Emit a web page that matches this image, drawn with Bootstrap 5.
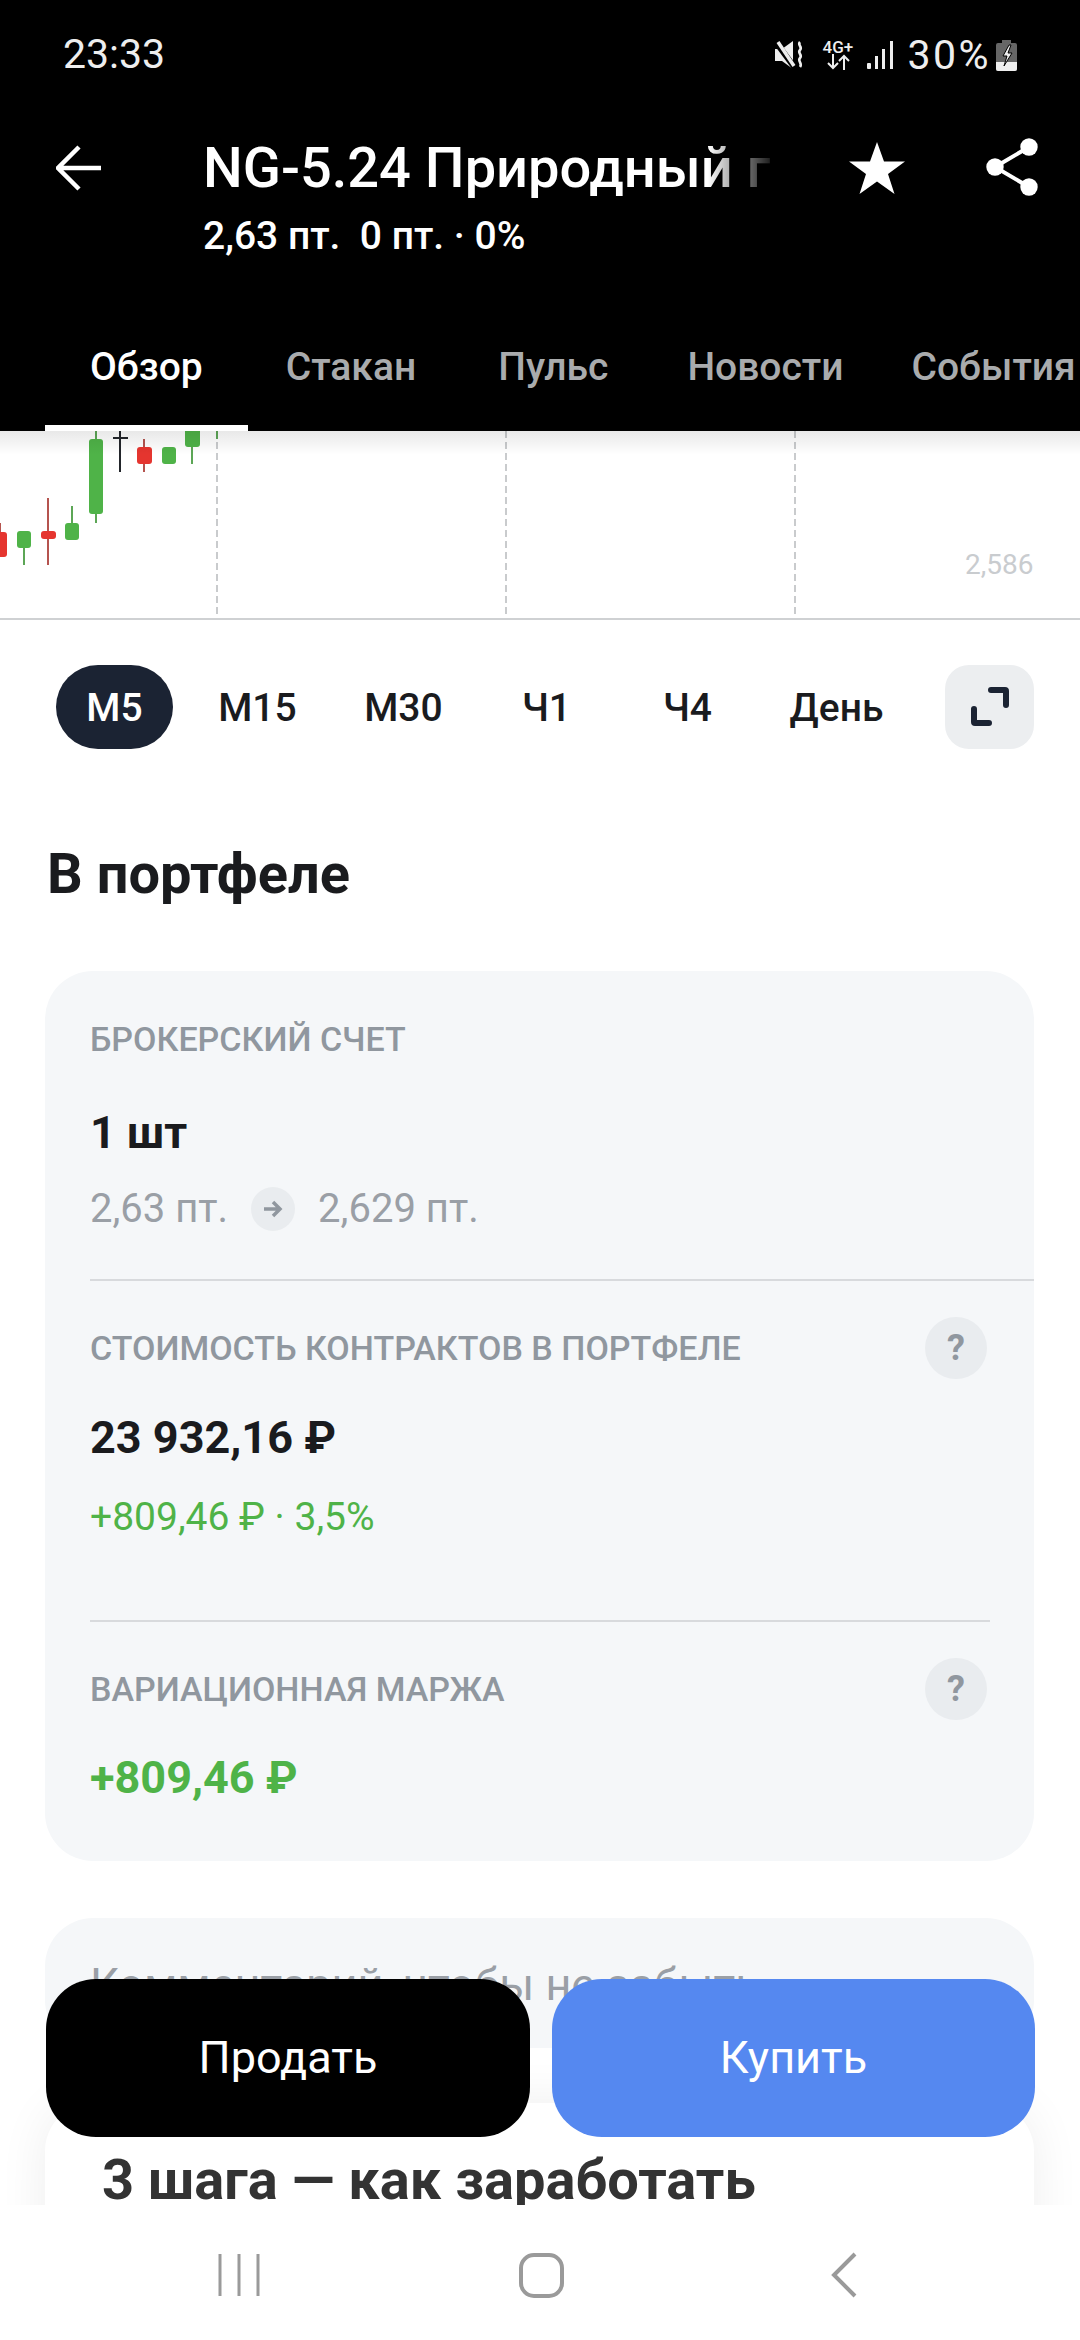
<!DOCTYPE html>
<html lang="ru">
<head>
<meta charset="utf-8">
<title>NG-5.24</title>
<link href="https://cdn.jsdelivr.net/npm/bootstrap@5.3.0/dist/css/bootstrap.min.css" rel="stylesheet">
<style>
html,body{margin:0;height:2340px;overflow:hidden;background:#fff;}
body{font-family:Roboto,"Liberation Sans",sans-serif;color:#1a1b1e;}
.app-shell{height:2340px;}
.top-zone{background:#000;color:#fff;height:431px;flex:none;}
.status-row{height:110px;padding:0 63px;}
.clock{font-size:41px;line-height:1;color:#eee;margin-top:-2px;}
.net-stack{width:33px;margin:0 13px 0 16px;line-height:1;}
.net-text{font-size:17px;font-weight:500;color:#eee;line-height:14px;}
.pct{font-size:41px;line-height:1;color:#eee;margin:0 5px 0 13px;letter-spacing:2.500px;}
.title-row{height:148px;padding-left:56px;}
.back-wrap{width:147px;flex:none;padding-top:35px;}
.title-col{width:570px;flex:none;padding-top:26px;}
.title-main{font-size:56px;font-weight:500;line-height:64px;white-space:nowrap;width:fit-content;-webkit-mask-image:linear-gradient(90deg,#000 89%,rgba(0,0,0,.12) 100%);mask-image:linear-gradient(90deg,#000 89%,rgba(0,0,0,.12) 100%);}
.title-sub{font-size:39px;font-weight:500;line-height:44px;margin-top:14px;white-space:nowrap;}
.star-ic{margin:32px 0 0 76px;}
.share-ic{margin:28px 0 0 81px;}
.tab-strip{padding:84px 0 0 45px;flex-wrap:nowrap;height:173px;margin:0;}
.tab-item{color:#a9abad;font-size:39px;font-weight:500;line-height:50px;padding:0;margin-right:82px;white-space:nowrap;}
.tab-item:hover{color:#a9abad;}
.tab-first,.tab-first:hover{padding:0 45px;margin-right:38px;border-bottom:6px solid #fff;color:#fff;}
.tab-mid{margin-right:79px;}
.tab-close{margin-right:68px;}
.main-zone{flex:1 1 auto;min-height:0;overflow:hidden;}
.chart-box{height:189px;border-bottom:2px solid #cfd1d3;}
.chart-box svg{display:block;}
.axis-label{font-size:28px;fill:#c9cccf;font-family:Roboto,"Liberation Sans",sans-serif;}
.period-row{padding:45px 46px 0 56px;}
.period-item{width:117px;height:84px;margin-right:26px;font-size:39px;font-weight:500;color:#1a1b1e;padding:0;border-radius:42px;line-height:86px;text-align:center;white-space:nowrap;}
.period-item:hover{color:#1a1b1e;}
.period-on,.period-on:hover{background:#1b2333;color:#fff;}
.gap-wide{margin-right:29px;}
.gap-tight{margin-right:24px;}
.gap-day{margin-right:32px;}
.expand-btn{width:89px;height:84px;background:#eceef0;border-radius:24px;margin-left:auto;}
.sect-title{font-size:56px;font-weight:700;line-height:64px;margin:93px 0 0 47px;color:#1a1b1e;}
.pf-card{margin:65px 46px 0 45px;background:#f5f7f9;border:0;border-radius:48px;height:890px;padding:0 0 0 45px;}
.pf-label{font-size:34px;font-weight:500;color:#90979f;line-height:40px;white-space:nowrap;}
.pf-big{font-size:45px;font-weight:700;line-height:50px;color:#1a1b1e;}
.pf-price{font-size:40px;color:#9a9fa6;line-height:46px;white-space:nowrap;}
.go-dot{width:44px;height:44px;border-radius:50%;background:#e9ecef;margin:0 23px;}
.pf-rule-a{border-top:2px solid #d8dadd;margin-top:47px;}
.pf-rule-b{border-top:2px solid #d8dadd;margin:81px 44px 0 0;}
.qmark{width:62px;height:62px;border-radius:50%;background:#e9ecef;color:#90979f;font-size:36px;font-weight:700;line-height:62px;text-align:center;flex:none;margin-right:47px;}
.pos-text{color:#4fb348;font-size:39px;line-height:44px;white-space:nowrap;margin-top:32px;}
.pos-big{color:#4fb348;font-size:45px;font-weight:700;line-height:50px;margin-top:33px;}
.pf-a{margin-top:48px;}
.pf-b{margin-top:49px;}
.pf-c{margin-top:28px;}
.pf-d{margin-top:36px;}
.pf-e{margin-top:34px;}
.pf-h{margin-top:36px;}
.note-card{margin:57px 46px 0 45px;background:#f5f7f9;border:0;border-radius:48px;height:130px;padding:40px 45px 0;color:#9a9fa6;font-size:45px;line-height:54px;white-space:nowrap;}
.step-card{position:absolute;left:45px;right:46px;top:1672px;height:400px;background:#fff;border:0;border-radius:48px;box-shadow:0 0 50px rgba(0,0,0,.07);padding:45px 57px;font-size:56px;font-weight:700;line-height:64px;color:#333;white-space:nowrap;}
.deal-btn{position:absolute;top:1548px;height:158px;border:0;border-radius:50px;font-size:45px;font-weight:400;color:#fff;padding:0;}
.deal-sell,.deal-sell:hover{left:46px;width:484px;background:#000;color:#fff;}
.deal-buy,.deal-buy:hover{left:552px;width:483px;background:#5588f0;color:#fff;}
.sys-nav{height:135px;flex:none;background:#fff;z-index:2;}
.sys-nav svg{display:block;}
</style>
</head>
<body>
<div class="app-shell d-flex flex-column">
  <header class="top-zone">
    <div class="status-row d-flex justify-content-between align-items-center">
      <span class="clock">23:33</span>
      <div class="d-flex align-items-center">
        <svg width="30" height="28" viewBox="0 0 30 28"><path d="M0 8h7l11-8v28L7 20H0z" fill="#eee"/><path d="M0 0l20 27" stroke="#000" stroke-width="6"/><path d="M3 1l16 24" stroke="#eee" stroke-width="3.500"/><path d="M25 1c-3 3 3 5 0 8s3 5 0 8 3 5 0 9" fill="none" stroke="#eee" stroke-width="2.600"/></svg>
        <div class="net-stack d-flex flex-column align-items-center">
          <span class="net-text">4G+</span>
          <svg width="26" height="16" viewBox="0 0 26 16"><path d="M8 0v14M3 9l5 5 5-5M19 16V2M14 7l5-5 5 5" fill="none" stroke="#eee" stroke-width="2"/></svg>
        </div>
        <svg width="27" height="28" viewBox="0 0 27 28"><g fill="#eee"><rect x="0" y="22" width="4" height="6" rx="1"/><rect x="8" y="15" width="3" height="13"/><rect x="15" y="8" width="3" height="20"/><rect x="23" y="0" width="3" height="28"/></g></svg>
        <span class="pct">30%</span>
        <svg width="21" height="31" viewBox="0 0 21 31"><path d="M6 0h9v3h4a2 2 0 0 1 2 2v24a2 2 0 0 1-2 2H2a2 2 0 0 1-2-2V5a2 2 0 0 1 2-2h4z" fill="#666"/><path d="M0 22h21v7a2 2 0 0 1-2 2H2a2 2 0 0 1-2-2z" fill="#eee"/><path d="M13 5l-6 11h4l-3 10 8-13h-4l3-8z" fill="#eee" stroke="#000" stroke-width="1"/></svg>
      </div>
    </div>
    <div class="title-row d-flex align-items-start">
      <div class="back-wrap">
        <svg width="46" height="46" viewBox="0 0 46 46"><path d="M45 23H3M23 2L2 23l21 21" fill="none" stroke="#fff" stroke-width="4.500"/></svg>
      </div>
      <div class="title-col">
        <div class="title-main">NG-5.24 Природный г</div>
        <div class="title-sub">2,63 пт.&nbsp; 0 пт. · 0%</div>
      </div>
      <svg class="star-ic" width="56" height="52" viewBox="0 0 56 52"><path d="M28 0l7 19.500h21L39 32l6.500 20L28 39.500 10.500 52 17 32 0 19.500h21z" fill="#fff"/></svg>
      <svg class="share-ic" width="52" height="60" viewBox="0 0 52 60"><g fill="#fff"><circle cx="43" cy="9" r="8.700"/><circle cx="9" cy="29" r="8.700"/><circle cx="43" cy="49" r="8.700"/></g><path d="M43 9L9 29l34 20" fill="none" stroke="#fff" stroke-width="4"/></svg>
    </div>
    <nav class="nav tab-strip">
      <a class="nav-link tab-item tab-first" href="#">Обзор</a>
      <a class="nav-link tab-item" href="#">Стакан</a>
      <a class="nav-link tab-item tab-mid" href="#">Пульс</a>
      <a class="nav-link tab-item tab-close" href="#">Новости</a>
      <a class="nav-link tab-item" href="#">События</a>
    </nav>
  </header>
  <main class="main-zone position-relative">
    <div class="chart-box">
      <svg width="1080" height="187" viewBox="0 431 1080 187">
        <defs><linearGradient id="fadeTop" x1="0" y1="0" x2="0" y2="1"><stop offset="0" stop-color="#000" stop-opacity=".09"/><stop offset="1" stop-color="#000" stop-opacity="0"/></linearGradient></defs>
        <g stroke="#c9cbcd" stroke-width="2" stroke-dasharray="7 4"><path d="M217 431v187M506 431v187M795 431v187"/></g>
        <g stroke="#5ca656" stroke-width="2"><path d="M24 548v17M72 506v20M96 431v8M96 514v9M192 447v17M217 431v8"/></g>
        <g stroke="#b5544f" stroke-width="2"><path d="M0 523v10M48 498v67M144 439v33"/></g>
        <path d="M120 431v41M113 438h15" stroke="#22252a" stroke-width="2" fill="none"/>
        <g fill="#e5352f"><rect x="-8" y="532" width="15" height="25" rx="3"/><rect x="41" y="531" width="15" height="8" rx="3"/><rect x="137" y="447" width="15" height="17" rx="3"/></g>
        <g fill="#4fb348"><rect x="17" y="531" width="14" height="17" rx="3"/><rect x="65" y="523" width="14" height="17" rx="3"/><rect x="89" y="439" width="14" height="75" rx="3"/><rect x="162" y="447" width="14" height="17" rx="3"/><rect x="185" y="425" width="15" height="22" rx="3"/></g>
        <text class="axis-label" x="965" y="574">2,586</text>
        <rect x="0" y="431" width="1080" height="24" fill="url(#fadeTop)"/>
      </svg>
    </div>
    <div class="period-row d-flex align-items-center">
      <a class="nav-link period-item period-on" href="#">М5</a>
      <a class="nav-link period-item gap-wide" href="#">М15</a>
      <a class="nav-link period-item" href="#">М30</a>
      <a class="nav-link period-item gap-tight" href="#">Ч1</a>
      <a class="nav-link period-item gap-day" href="#">Ч4</a>
      <a class="nav-link period-item" href="#">День</a>
      <button class="btn expand-btn d-flex align-items-center justify-content-center p-0" type="button" aria-label="Развернуть">
        <svg width="44" height="44" viewBox="0 0 44 44"><path d="M23 5h14a1 1 0 0 1 1 1v14M6 24v13a1 1 0 0 0 1 1h14" fill="none" stroke="#1b2333" stroke-width="6" stroke-linecap="round"/></svg>
      </button>
    </div>
    <h2 class="sect-title">В портфеле</h2>
    <section class="card pf-card">
      <div class="pf-label pf-a">БРОКЕРСКИЙ СЧЕТ</div>
      <div class="pf-big pf-b">1 шт</div>
      <div class="pf-price d-flex align-items-center pf-c"><span>2,63 пт.</span><span class="go-dot d-flex align-items-center justify-content-center"><svg width="20" height="18" viewBox="0 0 20 18"><path d="M1 9h16M10 2l7 7-7 7" fill="none" stroke="#90979f" stroke-width="3.500"/></svg></span><span>2,629 пт.</span></div>
      <div class="pf-rule-a"></div>
      <div class="d-flex justify-content-between align-items-center pf-d"><span class="pf-label">СТОИМОСТЬ КОНТРАКТОВ В ПОРТФЕЛЕ</span><span class="qmark">?</span></div>
      <div class="pf-big pf-e">23 932,16 ₽</div>
      <div class="pos-text">+809,46 ₽ · 3,5%</div>
      <div class="pf-rule-b"></div>
      <div class="d-flex justify-content-between align-items-center pf-h"><span class="pf-label">ВАРИАЦИОННАЯ МАРЖА</span><span class="qmark">?</span></div>
      <div class="pos-big">+809,46 ₽</div>
    </section>
    <section class="card note-card">Комментарий, чтобы не забыть</section>
    <section class="card step-card">3 шага — как заработать</section>
    <button class="btn deal-btn deal-sell" type="button">Продать</button>
    <button class="btn deal-btn deal-buy" type="button">Купить</button>
  </main>
  <footer class="sys-nav position-relative d-flex align-items-center">
    <svg width="1080" height="135" viewBox="0 2205 1080 135"><g fill="none" stroke="#9a9a9a"><path d="M220 2254v42M239 2254v42M258 2254v42" stroke-width="3"/><rect x="521" y="2255" width="41" height="41" rx="13" stroke-width="4"/><path d="M855 2254l-21 21 21 21" stroke-width="4"/></g></svg>
  </footer>
</div>
<script src="https://cdn.jsdelivr.net/npm/bootstrap@5.3.0/dist/js/bootstrap.bundle.min.js"></script>
</body>
</html>
